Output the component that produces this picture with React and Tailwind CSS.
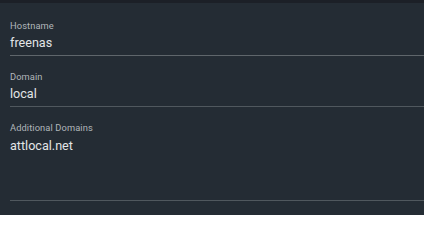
export default function App() {
  const font = { fontFamily: "Roboto, 'Liberation Sans', sans-serif" };
  return (
    <div className="w-[424px] h-[215px] bg-[#242c34] flex flex-col overflow-hidden" style={font}>
      <div className="h-[3px] bg-[#1c2027]" />
      <div className="pl-[10px] flex flex-col">
        <div className="mt-[17px] border-b border-[#5f666b]">
          <div className="text-[9.3px] leading-[11px] tracking-[0.1px] text-[#b0b6ba]">Hostname</div>
          <div className="mt-[4px] mb-[4px] text-[12.6px] leading-[16px] text-[#e2e5e7]">freenas</div>
        </div>
        <div className="mt-[15px] border-b border-[#50585e]">
          <div className="text-[9.3px] leading-[11px] tracking-[0.1px] text-[#b0b6ba]">Domain</div>
          <div className="mt-[4px] mb-[4px] text-[12.6px] leading-[16px] text-[#e2e5e7]">local</div>
        </div>
        <div className="mt-[15px] border-b border-[#50585e]">
          <div className="text-[9.3px] leading-[11px] tracking-[0.1px] text-[#b0b6ba]">Additional Domains</div>
          <div className="mt-[5px] h-[62px] text-[12.6px] leading-[16px] text-[#e2e5e7]">attlocal.net</div>
        </div>
      </div>
    </div>
  );
}
